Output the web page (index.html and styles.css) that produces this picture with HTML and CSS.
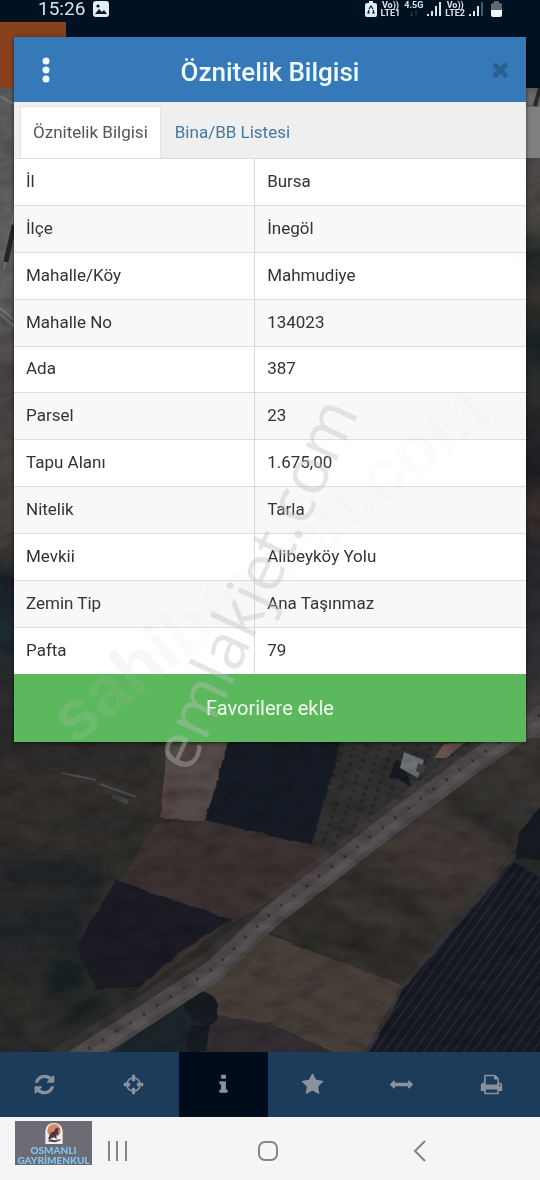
FILE: index.html
```html
<!DOCTYPE html>
<html lang="tr">
<head>
    <meta charset="UTF-8">
    <meta name="viewport" content="width=device-width, initial-scale=1.0">
    <title>Öznitelik Bilgisi</title>
    <link rel="stylesheet" href="styles.css">
</head>
<body>

<!-- satellite map behind everything -->
<svg class="map" viewBox="0 0 540 1180" preserveAspectRatio="xMidYMin slice" aria-hidden="true">
    <defs>
        <linearGradient id="leftEdge" x1="0" y1="88" x2="0" y2="760" gradientUnits="userSpaceOnUse">
            <stop offset="0" stop-color="#5c5c5e"/>
            <stop offset=".3" stop-color="#626161"/>
            <stop offset=".42" stop-color="#4d4849"/>
            <stop offset=".6" stop-color="#4a4340"/>
            <stop offset=".68" stop-color="#45413a"/>
            <stop offset=".73" stop-color="#1b2027"/>
            <stop offset=".8" stop-color="#1b2a31"/>
            <stop offset=".9" stop-color="#2d2e31"/>
            <stop offset="1" stop-color="#2a2a2c"/>
        </linearGradient>
        <linearGradient id="rightEdge" x1="0" y1="158" x2="0" y2="742" gradientUnits="userSpaceOnUse">
            <stop offset="0" stop-color="#4b4949"/>
            <stop offset=".1" stop-color="#4c4743"/>
            <stop offset=".17" stop-color="#222a2a"/>
            <stop offset=".25" stop-color="#38322f"/>
            <stop offset=".31" stop-color="#1c2729"/>
            <stop offset=".4" stop-color="#2f2d2c"/>
            <stop offset=".53" stop-color="#1d1f25"/>
            <stop offset=".6" stop-color="#3a2f2e"/>
            <stop offset=".7" stop-color="#26282d"/>
            <stop offset=".9" stop-color="#343235"/>
            <stop offset="1" stop-color="#4a4647"/>
        </linearGradient>
        <linearGradient id="meadow" x1="0" y1="742" x2="60" y2="1050" gradientUnits="userSpaceOnUse">
            <stop offset="0" stop-color="#2b2a2b"/>
            <stop offset=".22" stop-color="#33302d"/>
            <stop offset=".45" stop-color="#2b2b2a"/>
            <stop offset=".6" stop-color="#23262a"/>
            <stop offset=".8" stop-color="#2c2c2a"/>
            <stop offset="1" stop-color="#292b2c"/>
        </linearGradient>
        <linearGradient id="slope" x1="500" y1="760" x2="370" y2="980" gradientUnits="userSpaceOnUse">
            <stop offset="0" stop-color="#393631"/>
            <stop offset=".22" stop-color="#33302f"/>
            <stop offset=".35" stop-color="#403a37"/>
            <stop offset=".6" stop-color="#3a3531"/>
            <stop offset=".85" stop-color="#302d2b"/>
            <stop offset="1" stop-color="#35312f"/>
        </linearGradient>
        <pattern id="rows" width="8" height="8" patternUnits="userSpaceOnUse" patternTransform="rotate(36)">
            <rect width="8" height="8" fill="#181a23"/>
            <rect width="2" height="8" fill="#25262f"/>
        </pattern>
        <pattern id="furrows" width="4" height="4" patternUnits="userSpaceOnUse" patternTransform="rotate(18)">
            <rect width="4" height="4" fill="#4a403b"/>
            <rect width="4" height="1" fill="#453b35"/>
        </pattern>
        <pattern id="orchard" width="12" height="8" patternUnits="userSpaceOnUse" patternTransform="rotate(18)">
            <rect width="12" height="8" fill="#333031"/>
            <circle cx="4" cy="3" r="2" fill="#282729"/>
        </pattern>
        <filter id="soft"><feGaussianBlur stdDeviation="4"/></filter>
        <filter id="edge" x="-5%" y="-5%" width="110%" height="110%">
            <feTurbulence type="fractalNoise" baseFrequency=".07" numOctaves="2" seed="4" result="n"/>
            <feDisplacementMap in="SourceGraphic" in2="n" scale="4" xChannelSelector="R" yChannelSelector="G"/>
            <feGaussianBlur stdDeviation=".5"/>
        </filter>
        <filter id="grain" x="0" y="0" width="100%" height="100%">
            <feTurbulence type="fractalNoise" baseFrequency=".04 .08" numOctaves="4" seed="9"/>
            <feColorMatrix values="0 0 0 0 0  0 0 0 0 0  0 0 0 0 0  1.2 0 0 0 -.45"/>
        </filter>
    </defs>

    <rect width="540" height="1180" fill="#282a2b"/>
    <rect y="88" width="40" height="672" fill="url(#leftEdge)"/>
    <path d="M0 96l14 8M14 210L4 270M0 308l14 12M0 314l14 12" stroke="#77757a" stroke-width="2"/>
    <path d="M14 225L6 262" stroke="#26272b" stroke-width="5"/>
    <rect x="500" y="88" width="40" height="70" fill="#6b6a6a"/>
    <rect x="500" y="158" width="40" height="590" fill="url(#rightEdge)"/>
    <path d="M540 88l-5 18" stroke="#2b2b2d" stroke-width="4"/>

    <rect y="740" width="300" height="320" fill="url(#meadow)"/>
    <g filter="url(#soft)" opacity=".6">
        <path d="M0 768L150 800M0 830L120 850" stroke="#3b3531" stroke-width="12"/>
        <path d="M0 870L100 875M60 910L90 960" stroke="#1e2226" stroke-width="22"/>
        <path d="M0 980L50 1040" stroke="#35312d" stroke-width="24"/>
        <path d="M165 745L150 820 80 940" stroke="#36342f" stroke-width="10" fill="none"/>
    </g>
    <path d="M514 862l36 22v172H366l38-68z" fill="url(#rows)"/>
    <g filter="url(#edge)">
        <path d="M168 738h66l-30 84-44-4z" fill="#554b48"/>
        <path d="M229 738h116l-33 107-106-25z" fill="#131f28"/>
        <path d="M342 738h150L330 856l-18-13z" fill="url(#orchard)"/>
        <path d="M155 824l50-3 118 26 10 18-101 58-112-42z" fill="#3d3332"/>
        <path d="M116 880l116 40-84 66-52 4-20-44z" fill="#1e1f28"/>
        <path d="M232 920l-92 72-10 4 52-46z" fill="#3b302e"/>
        <path d="M268 932L516 738h30v74L402 986z" fill="url(#slope)"/>
        <path d="M268 934l136 52-38 68H330l-120-40-12-30z" fill="url(#furrows)"/>
        <path d="M212 1014l60 10 72 32H200z" fill="#322e30"/>
        <path d="M514 855L404 985l-38 69" stroke="#35343a" stroke-width="4" fill="none"/>
        <path d="M110 1056l70-60 22 20-4 40z" fill="#1f282c"/>
        <path d="M180 998q4-12 18-8 20 4 20 18 2 18-12 16-22-6-26-26z" fill="#121a21"/>
        <path d="M192 1024h18l-4 28h-22zM145 1018l12-9 4 5-14 9z" fill="#171e22"/>
        <path d="M516 858l2-24 22-28v54zM398 758l-10 18 24 10z" fill="#151d22"/>
    </g>
    <g filter="url(#soft)">
        <path d="M50 965q16-10 34 4l-4 22-32 2zM66 1012l30-18 6 10-36 22z" fill="#192024"/>
        <ellipse cx="170" cy="797" rx="6" ry="8" fill="#4c2c34" opacity=".7"/>
    </g>
    <g filter="url(#soft)" opacity=".5">
        <path d="M290 930L400 960M350 870L430 920M450 800L510 840" stroke="#24221f" stroke-width="7"/>
        <path d="M375 840L470 880M330 900L400 930" stroke="#4a413b" stroke-width="12"/>
    </g>

    <path d="M50 1068L140 1012 215 962 270 912 330 866 400 812 470 760 545 706" stroke="#4b4442" stroke-width="28" fill="none" opacity=".4"/>
    <path d="M60 1070L140 1019 215 970 270 917 330 871 400 817 470 765 545 714" stroke="#4f4b4d" stroke-width="22" fill="none"/>
    <path d="M60 1074L140 1023 215 974 270 921 330 875 400 821 470 769 545 718" stroke="#585455" stroke-width="7" fill="none"/>
    <path d="M75 1057L140 1017 215 967 270 914 330 868 400 814 470 762 545 711" stroke="#302e31" stroke-width="3" stroke-dasharray="2 14" fill="none"/>
    <path d="M404 752l20 8-6 18-18-10z" fill="#6d7479"/>
    <path d="M418 763l8 3-3 8-7-3z" fill="#3c3f43"/>
    <path d="M434 758l10-14 22-2-20 16z" fill="#66534c"/>
    <path d="M62 773l34 7M100 784l36 13" stroke="#4c4c4e" stroke-width="2"/>
    <path d="M112 796l16 6" stroke="#434647" stroke-width="5"/>

    <rect y="88" width="540" height="970" filter="url(#grain)" opacity=".35"/>
    <rect x="520" y="107" width="20" height="51" fill="#7f7f80"/>
    <rect width="540" height="88" fill="#001222"/>
    <rect y="22" width="66" height="66" fill="#89401c"/>
</svg>

<div class="screen">
    <header class="statusbar">
        <span class="clock">15:26</span>
        <svg class="picture-icon" viewBox="0 0 16 16" aria-hidden="true">
            <rect width="16" height="16" rx="3" fill="#e4ebf2"/>
            <path d="M2 13l4-5 3 3 2-2 3 4z" fill="#001627"/>
            <circle cx="5" cy="5" r="1.6" fill="#001627"/>
        </svg>
        <div class="status-right">
            <svg class="saver-icon" viewBox="0 0 12 16" aria-hidden="true">
                <path d="M4 0h4v2h2q2 0 2 2v10q0 2-2 2H2q-2 0-2-2V4q0-2 2-2h2z" fill="#e4ebf2"/>
                <path d="M4 8l2-3 2 3M8 9l1 3H7M5 12H3l1-3" fill="none" stroke="#001627" stroke-width="1.200"/>
            </svg>
            <span class="network">Vo))<br>LTE1</span>
            <span class="network">4.5G<br><i>↓↑</i></span>
            <svg class="signal-icon" viewBox="0 0 14 14" aria-hidden="true">
                <path d="M0 12h2v2H0zM4 9h2v5H4zM8 4h2v10H8zM12 0h2v14h-2z" fill="#dbe3ea"/>
            </svg>
            <span class="network">Vo))<br>LTE2</span>
            <svg class="signal-icon" viewBox="0 0 14 14" aria-hidden="true">
                <path d="M0 12h2v2H0zM4 9h2v5H4zM8 4h2v10H8z" fill="#dbe3ea"/>
                <path d="M12 0h2v14h-2z" fill="#475766"/>
            </svg>
            <svg class="battery-icon" viewBox="0 0 11 16" aria-hidden="true">
                <path d="M3 0h5v2h1q2 0 2 2v6H0V4q0-2 2-2h1z" fill="#5c6873"/>
                <path d="M0 9h11v5q0 2-2 2H2q-2 0-2-2z" fill="#f2f5f7"/>
            </svg>
        </div>
    </header>

    <main class="content">
        <section class="modal">
            <div class="modal-header">
                <button class="icon-button" type="button" aria-label="Menü">
                    <svg class="dots" viewBox="0 0 8 26" aria-hidden="true">
                        <circle cx="4" cy="4" r="3.500"/><circle cx="4" cy="13" r="3.500"/><circle cx="4" cy="22" r="3.500"/>
                    </svg>
                </button>
                <h1>Öznitelik Bilgisi</h1>
                <button class="icon-button close" type="button" aria-label="Kapat">
                    <svg class="icon" viewBox="0 0 1792 1792" aria-hidden="true"><path d="M1490 1322q0 40-28 68l-136 136q-28 28-68 28t-68-28l-294-294-294 294q-28 28-68 28t-68-28l-136-136q-28-28-28-68t28-68l294-294-294-294q-28-28-28-68t28-68l136-136q28-28 68-28t68 28l294 294 294-294q28-28 68-28t68 28l136 136q28 28 28 68t-28 68l-294 294 294 294q28 28 28 68z"/></svg>
                </button>
            </div>
            <nav class="tabs">
                <a class="tab active" href="#oznitelik">Öznitelik Bilgisi</a>
                <a class="tab" href="#bina">Bina/BB Listesi</a>
            </nav>
            <table class="info-table" id="oznitelik">
                <tbody>
                    <tr><th scope="row">İl</th><td>Bursa</td></tr>
                    <tr><th scope="row">İlçe</th><td>İnegöl</td></tr>
                    <tr><th scope="row">Mahalle/Köy</th><td>Mahmudiye</td></tr>
                    <tr><th scope="row">Mahalle No</th><td>134023</td></tr>
                    <tr><th scope="row">Ada</th><td>387</td></tr>
                    <tr><th scope="row">Parsel</th><td>23</td></tr>
                    <tr><th scope="row">Tapu Alanı</th><td>1.675,00</td></tr>
                    <tr><th scope="row">Nitelik</th><td>Tarla</td></tr>
                    <tr><th scope="row">Mevkii</th><td>Alibeyköy Yolu</td></tr>
                    <tr><th scope="row">Zemin Tip</th><td>Ana Taşınmaz</td></tr>
                    <tr><th scope="row">Pafta</th><td>79</td></tr>
                </tbody>
            </table>
            <button class="favorite" type="button">Favorilere ekle</button>
        </section>
    </main>

    <nav class="toolbar">
        <button type="button" aria-label="Yenile"><svg class="icon" viewBox="0 0 1792 1792" aria-hidden="true"><path d="M1639 1056q0 5-1 7-64 268-268 434.500t-478 166.500q-146 0-282.500-55t-243.500-157l-129 129q-19 19-45 19t-45-19-19-45v-448q0-26 19-45t45-19h448q26 0 45 19t19 45-19 45l-137 137q71 66 161 102t187 36q134 0 250-65t186-179q11-17 53-117 8-23 30-23h192q13 0 22.500 9.500t9.500 22.500zm25-800v448q0 26-19 45t-45 19h-448q-26 0-45-19t-19-45 19-45l138-138q-148-137-349-137-134 0-250 65t-186 179q-11 17-53 117-8 23-30 23h-199q-13 0-22.500-9.500t-9.500-22.500v-7q65-268 270-434.500t480-166.500q146 0 284 55.500t245 156.500l130-129q19-19 45-19t45 19 19 45z"/></svg></button>
        <button type="button" aria-label="Konum"><svg class="icon" viewBox="0 0 1792 1792" aria-hidden="true"><path d="M1325 1024h-109q-26 0-45-19t-19-45v-128q0-26 19-45t45-19h109q-32-108-112.500-188.500t-188.500-112.500v109q0 26-19 45t-45 19h-128q-26 0-45-19t-19-45v-109q-108 32-188.500 112.500t-112.500 188.500h109q26 0 45 19t19 45v128q0 26-19 45t-45 19h-109q32 108 112.500 188.500t188.500 112.500v-109q0-26 19-45t45-19h128q26 0 45 19t19 45v109q108-32 188.500-112.500t112.500-188.500zm339-192v128q0 26-19 45t-45 19h-143q-37 161-154.500 278.500t-278.500 154.500v143q0 26-19 45t-45 19h-128q-26 0-45-19t-19-45v-143q-161-37-278.500-154.500t-154.500-278.500h-143q-26 0-45-19t-19-45v-128q0-26 19-45t45-19h143q37-161 154.500-278.500t278.500-154.500v-143q0-26 19-45t45-19h128q26 0 45 19t19 45v143q161 37 278.500 154.500t154.500 278.500h143q26 0 45 19t19 45z"/></svg></button>
        <button class="active" type="button" aria-label="Bilgi"><svg class="icon" viewBox="0 0 1792 1792" aria-hidden="true"><path d="M1216 1344v128q0 26-19 45t-45 19h-512q-26 0-45-19t-19-45v-128q0-26 19-45t45-19h64v-384h-64q-26 0-45-19t-19-45v-128q0-26 19-45t45-19h384q26 0 45 19t19 45v576h64q26 0 45 19t19 45zm-128-1152v192q0 26-19 45t-45 19h-256q-26 0-45-19t-19-45v-192q0-26 19-45t45-19h256q26 0 45 19t19 45z"/></svg></button>
        <button type="button" aria-label="Favoriler"><svg class="icon" viewBox="0 0 1792 1792" aria-hidden="true"><path d="M1728 647q0 22-26 48l-363 354 86 500q1 7 1 20 0 21-10.500 35.500t-30.500 14.500q-19 0-40-12l-449-236-449 236q-22 12-40 12-21 0-31.500-14.500t-10.500-35.500q0-6 2-20l86-500-364-354q-25-27-25-48 0-37 56-46l502-73 225-455q19-41 49-41t49 41l225 455 502 73q56 9 56 46z"/></svg></button>
        <button type="button" aria-label="Ölçüm"><svg class="icon" viewBox="0 0 1792 1792" aria-hidden="true"><path d="M1792 896q0 26-19 45l-256 256q-19 19-45 19t-45-19-19-45v-128h-1024v128q0 26-19 45t-45 19-45-19l-256-256q-19-19-19-45t19-45l256-256q19-19 45-19t45 19 19 45v128h1024v-128q0-26 19-45t45-19 45 19l256 256q19 19 19 45z"/></svg></button>
        <button type="button" aria-label="Yazdır"><svg class="icon" viewBox="0 0 1792 1792" aria-hidden="true"><path d="M448 1536h896v-256h-896v256zm0-640h896v-384h-160q-40 0-68-28t-28-68v-160h-640v640zm1152 64q0-26-19-45t-45-19-45 19-19 45 19 45 45 19 45-19 19-45zm128 0v416q0 13-9.500 22.500t-22.500 9.500h-224v160q0 40-28 68t-68 28h-960q-40 0-68-28t-28-68v-160h-224q-13 0-22.500-9.500t-9.500-22.500v-416q0-79 56.500-135.500t135.500-56.500h64v-544q0-40 28-68t68-28h672q40 0 88 20t76 48l152 152q28 28 48 76t20 88v256h64q79 0 135.500 56.500t56.500 135.500z"/></svg></button>
    </nav>

    <footer class="navbar">
        <button type="button" aria-label="Son uygulamalar">
            <svg viewBox="0 0 24 24" aria-hidden="true"><path d="M4 2v20M12 2v20M21 2v20"/></svg>
        </button>
        <button type="button" aria-label="Ana ekran">
            <svg viewBox="0 0 24 24" aria-hidden="true"><rect x="3" y="3" width="18" height="18" rx="6"/></svg>
        </button>
        <button type="button" aria-label="Geri">
            <svg viewBox="0 0 24 24" aria-hidden="true"><path d="M18 2L8 12l10 10"/></svg>
        </button>
        <div class="brand">
            <svg viewBox="0 0 20 24" aria-hidden="true">
                <path d="M1 23V9q1-8 9-8t9 8v14z" fill="#f1eeee"/>
                <circle cx="10" cy="9" r="7" fill="#d98667"/>
                <path d="M4 17l3-6 3-1 2-4 4 1-2 2 1 3-3 2 1 4-3-2-3 1-2 2z" fill="#453c45"/>
                <path d="M3 20l4-2 3 1 7-1v1l-6 2z" fill="#4b4752"/>
            </svg>
            <div>OSMANLI<br>GAYRİMENKUL</div>
        </div>
    </footer>
</div>

<svg class="watermark" viewBox="0 0 540 1180" preserveAspectRatio="xMidYMin slice" aria-hidden="true">
    <defs>
        <linearGradient id="fade" x1="0" x2="1">
            <stop offset="0" stop-color="#c0c0c0" stop-opacity=".2"/>
            <stop offset=".2" stop-color="#b0b0b0" stop-opacity=".1"/>
            <stop offset=".3" stop-color="#a0a0a0" stop-opacity=".03"/>
            <stop offset="1" stop-color="#a0a0a0" stop-opacity=".03"/>
        </linearGradient>
    </defs>
    <text class="mark-wide" transform="translate(74 746) rotate(-38)">sahibinden.com</text>
    <text class="mark-tall" transform="translate(190 775) rotate(-65)">emlakjet.com</text>
</svg>

</body>
</html>
```

FILE: styles.css
```css
* {
    box-sizing: border-box;
}
body {
    font-family: Roboto, "Liberation Sans", sans-serif;
    margin: 0;
    background-color: #282a2b;
    color: #333;
}
button {
    font-family: inherit;
    border: none;
    padding: 0;
    background: none;
    cursor: pointer;
}
.map, .watermark {
    position: absolute;
    top: 0;
    left: 0;
    width: 100%;
    height: 100%;
}
.watermark {
    pointer-events: none;
}
.mark-tall {
    font-family: "Open Sans", sans-serif;
    font-size: 64px;
    fill: rgba(190, 190, 190, 0.4);
}
.mark-wide {
    font-family: "Liberation Sans", sans-serif;
    font-size: 70px;
    font-weight: bold;
    fill: url(#fade);
}
.screen {
    position: relative;
    display: flex;
    flex-direction: column;
    min-height: 100vh;
}

/* phone status bar */
.statusbar {
    display: flex;
    align-items: center;
    gap: 8px;
    height: 18px;
    padding: 0 38px;
    color: #dbe3ea;
}
.clock {
    font-size: 19px;
    line-height: 18px;
}
.picture-icon {
    width: 16px;
    height: 16px;
}
.status-right {
    display: flex;
    align-items: center;
    gap: 4px;
    margin-left: auto;
}
.network {
    font-size: 9px;
    font-weight: bold;
    line-height: 8px;
    text-align: center;
}
.network i {
    font-style: normal;
    color: #5d6b78;
}
.saver-icon {
    width: 12px;
    height: 16px;
}
.signal-icon {
    width: 14px;
    height: 14px;
}
.battery-icon {
    width: 11px;
    height: 16px;
    margin-left: 4px;
}

/* dialog */
.content {
    flex: 1;
    padding: 19px 14px;
}
.modal {
    background-color: white;
    box-shadow: 0 1px 4px rgba(0, 0, 0, 0.6);
}
.modal-header {
    display: flex;
    align-items: center;
    justify-content: space-between;
    height: 65px;
    padding: 0 14px;
    background-color: #3579b8;
}
.modal-header h1 {
    margin: 0;
    font-size: 26px;
    font-weight: 500;
    line-height: 32px;
    color: #effaff;
    padding-top: 4px;
}
.icon-button {
    display: flex;
    align-items: center;
    justify-content: center;
    width: 36px;
    height: 40px;
}
.dots {
    width: 8px;
    height: 26px;
    fill: #effaff;
}
.close {
    justify-content: flex-end;
}
.close .icon {
    fill: #28608f;
}
.icon {
    width: 23px;
    height: 23px;
}
.tabs {
    display: flex;
    padding: 4px 6px 0;
    background-color: #efefef;
    border-bottom: 1px solid #ddd;
}
.tab {
    padding: 13px 12px 14px;
    border: 1px solid transparent;
    border-bottom: none;
    margin-right: 1px;
    font-size: 17px;
    line-height: 24px;
    color: #44799f;
    text-decoration: none;
}
.tab.active {
    color: #555;
    background-color: white;
    border-color: #e4e4e4;
}
.info-table {
    width: 100%;
    height: 515px;
    table-layout: fixed;
    border-collapse: collapse;
    font-size: 17px;
    line-height: 24px;
}
.info-table tr + tr {
    border-top: 1px solid #ddd;
}
.info-table tr:nth-child(even) {
    background-color: #f8f8f8;
}
.info-table th, .info-table td {
    padding: 0 12px 2px;
    font-weight: normal;
    text-align: left;
}
.info-table th {
    width: 47%;
    border-right: 1px solid #d8d8d8;
}
.favorite {
    display: block;
    width: 100%;
    height: 68px;
    background-color: #5cb85c;
    color: #f0fbee;
    font-size: 20px;
}

/* map tools */
.toolbar {
    display: grid;
    grid-template-columns: repeat(6, 1fr);
    height: 65px;
    padding-right: 4px;
    background-color: #1b3c5b;
}
.toolbar button {
    display: flex;
    align-items: center;
    justify-content: center;
}
.toolbar .active {
    background-color: #010c1a;
}
.toolbar .icon {
    fill: #8a919b;
}

/* android buttons */
.navbar {
    position: relative;
    display: grid;
    grid-template-columns: repeat(3, 1fr);
    align-items: center;
    height: 63px;
    padding: 4px 46px 0 42px;
    background-color: #f5f5f7;
}
.navbar button {
    display: flex;
    justify-content: center;
}
.navbar button svg {
    width: 24px;
    height: 24px;
    fill: none;
    stroke: #858587;
    stroke-width: 2;
}
.brand {
    position: absolute;
    top: 4px;
    left: 15px;
    display: flex;
    flex-direction: column;
    align-items: center;
    width: 77px;
    height: 44px;
    padding-top: 1px;
    background-color: #6d6c74;
    color: #7dc8f3;
    font-family: Lato, sans-serif;
    font-size: 10px;
    font-weight: 900;
    line-height: 10px;
    text-align: center;
}
.brand svg {
    width: 20px;
    height: 23px;
}
```
